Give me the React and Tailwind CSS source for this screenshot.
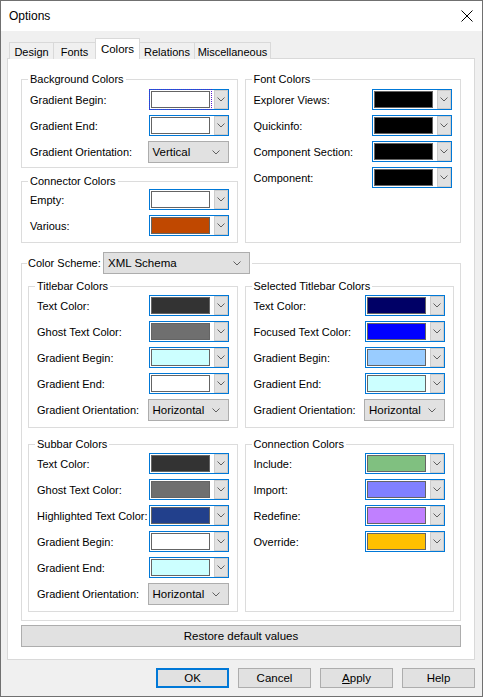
import React from "react";

const Chevron = () => (
  <svg width="8" height="5" viewBox="0 0 8 5" className="block">
    <path d="M0.5 0.5 L4 4 L7.5 0.5" fill="none" stroke="#606060" strokeWidth="1" />
  </svg>
);

const ColorCombo = ({ color, focused }) => (
  <div className="relative w-[80px] h-[21px] border border-[#0078d7] bg-white flex items-center shrink-0">
    <div
      className="ml-[1px] w-[59px] h-[17px] border border-[#646464]"
      style={{ backgroundColor: color }}
    />
    {focused && (
      <div className="absolute -left-px -top-px -bottom-px w-[63px] border border-dotted border-[#5a1fd0]" />
    )}
    <div className="ml-auto w-[14px] h-[19px] bg-[#e1e1e1] border border-[#cccccc] flex items-center justify-center">
      <Chevron />
    </div>
  </div>
);

const SelectCombo = ({ value, width = "w-[81px]" }) => (
  <div className={`${width} h-[22px] bg-[#e1e1e1] border border-[#adadad] flex items-center justify-between pl-[4px] pr-[8px] shrink-0`}>
    <span className="text-[11.5px]">{value}</span>
    <Chevron />
  </div>
);

const Row = ({ label, children }) => (
  <div className="flex items-center justify-between">
    <span>{label}</span>
    {children}
  </div>
);

const Group = ({ title, className = "", pt = "pt-[2px]", pb = "pb-[6px]", children }) => (
  <fieldset className={`border border-[#dcdcdc] px-[8px] min-w-0 ${pt} ${pb} ${className}`}>
    <legend className="-ml-[2px] px-[2px] leading-[14px]">{title}</legend>
    <div className="flex flex-col gap-[5px]">{children}</div>
  </fieldset>
);

const tabs = [
  { name: "Design", w: "w-[45px]" },
  { name: "Fonts", w: "w-[43px]" },
  { name: "Colors", w: "w-[45px]", active: true },
  { name: "Relations", w: "w-[56px]" },
  { name: "Miscellaneous", w: "w-[77px]" },
];

const Button = ({ children, primary }) => (
  <div
    className={`w-[73px] h-[20px] bg-[#e1e1e1] flex items-center justify-center text-[11.5px] ${
      primary ? "border-2 border-[#0078d7]" : "border border-[#adadad]"
    }`}
  >
    {children}
  </div>
);

export default function App() {
  return (
    <div
      className="w-[483px] h-[697px] border border-[#707070] bg-[#f0f0f0] flex flex-col text-[11px] leading-[14px] text-black whitespace-nowrap overflow-hidden"
      style={{ fontFamily: '"Liberation Sans", Arial, sans-serif' }}
    >
      <div className="h-[30px] bg-white flex items-center justify-between pl-[8px] pr-[9px] shrink-0">
        <span className="text-[12px]">Options</span>
        <svg width="12" height="12" viewBox="0 0 12 12">
          <path d="M0.5 0.5 L11.5 11.5 M11.5 0.5 L0.5 11.5" stroke="#000" strokeWidth="1" />
        </svg>
      </div>

      <div className="mt-[7px] ml-[6px] w-[468px] shrink-0">
        <div className="relative z-10 flex items-end h-[21px] pl-[2px]">
          {tabs.map((t, i) =>
            t.active ? (
              <div
                key={t.name}
                className={`${t.w} ${i > 0 ? "-ml-px" : ""} h-[21px] bg-white border border-b-0 border-[#d9d9d9] flex items-start justify-center pt-[3px] text-[11.5px]`}
              >
                {t.name}
              </div>
            ) : (
              <div
                key={t.name}
                className={`${t.w} ${i > 0 ? "-ml-px" : ""} h-[17px] bg-[#f0f0f0] border border-b-0 border-[#d9d9d9] flex items-center justify-center pt-[1px] text-[11px]`}
              >
                {t.name}
              </div>
            )
          )}
        </div>

        <div className="-mt-px w-[468px] h-[602px] bg-white border border-[#d9d9d9] px-[13px] pt-[13px]">
          <div className="grid grid-cols-2 gap-x-[7px]">
            <div className="flex flex-col">
              <Group title="Background Colors" pt="pt-[3px]" pb="pb-[4px]">
                <Row label="Gradient Begin:">
                  <ColorCombo color="#ffffff" focused />
                </Row>
                <Row label="Gradient End:">
                  <ColorCombo color="#ffffff" />
                </Row>
                <Row label="Gradient Orientation:">
                  <SelectCombo value="Vertical" />
                </Row>
              </Group>
              <Group title="Connector Colors" className="mt-[6px]" pt="pt-[1px]" pb="pb-[6px]">
                <Row label="Empty:">
                  <ColorCombo color="#ffffff" />
                </Row>
                <Row label="Various:">
                  <ColorCombo color="#c04800" />
                </Row>
              </Group>
            </div>
            <Group title="Font Colors" pt="pt-[3px]">
              <Row label="Explorer Views:">
                <ColorCombo color="#000000" />
              </Row>
              <Row label="Quickinfo:">
                <ColorCombo color="#000000" />
              </Row>
              <Row label="Component Section:">
                <ColorCombo color="#000000" />
              </Row>
              <Row label="Component:">
                <ColorCombo color="#000000" />
              </Row>
            </Group>
          </div>

          <fieldset className="mt-[9px] border border-[#dcdcdc] px-[6px] pt-[5px] pb-[8px] min-w-0">
            <legend className="-ml-px px-[1px] pr-[2px] flex items-center">
              <span className="w-[75px]">Color Scheme:</span>
              <SelectCombo value="XML Schema" width="w-[147px]" />
            </legend>
            <div className="grid grid-cols-2 gap-x-[7px] gap-y-[9px]">
              <Group title="Titlebar Colors">
                <Row label="Text Color:">
                  <ColorCombo color="#333333" />
                </Row>
                <Row label="Ghost Text Color:">
                  <ColorCombo color="#6f6f6f" />
                </Row>
                <Row label="Gradient Begin:">
                  <ColorCombo color="#ccffff" />
                </Row>
                <Row label="Gradient End:">
                  <ColorCombo color="#ffffff" />
                </Row>
                <Row label="Gradient Orientation:">
                  <SelectCombo value="Horizontal" />
                </Row>
              </Group>
              <Group title="Selected Titlebar Colors">
                <Row label="Text Color:">
                  <ColorCombo color="#000066" />
                </Row>
                <Row label="Focused Text Color:">
                  <ColorCombo color="#0000ff" />
                </Row>
                <Row label="Gradient Begin:">
                  <ColorCombo color="#99ccff" />
                </Row>
                <Row label="Gradient End:">
                  <ColorCombo color="#ccffff" />
                </Row>
                <Row label="Gradient Orientation:">
                  <SelectCombo value="Horizontal" />
                </Row>
              </Group>
              <Group title="Subbar Colors">
                <Row label="Text Color:">
                  <ColorCombo color="#333333" />
                </Row>
                <Row label="Ghost Text Color:">
                  <ColorCombo color="#6f6f6f" />
                </Row>
                <Row label="Highlighted Text Color:">
                  <ColorCombo color="#22408c" />
                </Row>
                <Row label="Gradient Begin:">
                  <ColorCombo color="#ffffff" />
                </Row>
                <Row label="Gradient End:">
                  <ColorCombo color="#ccffff" />
                </Row>
                <Row label="Gradient Orientation:">
                  <SelectCombo value="Horizontal" />
                </Row>
              </Group>
              <Group title="Connection Colors">
                <Row label="Include:">
                  <ColorCombo color="#80c080" />
                </Row>
                <Row label="Import:">
                  <ColorCombo color="#8080ff" />
                </Row>
                <Row label="Redefine:">
                  <ColorCombo color="#c080ff" />
                </Row>
                <Row label="Override:">
                  <ColorCombo color="#ffc000" />
                </Row>
              </Group>
            </div>
          </fieldset>

          <div className="mt-[4px] h-[22px] bg-[#e1e1e1] border border-[#adadad] flex items-center justify-center text-[11.5px]">
            Restore default values
          </div>
        </div>
      </div>

      <div className="mt-[8px] pr-[7px] flex justify-end gap-[9px] shrink-0">
        <Button primary>OK</Button>
        <Button>Cancel</Button>
        <Button>
          <span>
            <span className="underline">A</span>pply
          </span>
        </Button>
        <Button>Help</Button>
      </div>
    </div>
  );
}
